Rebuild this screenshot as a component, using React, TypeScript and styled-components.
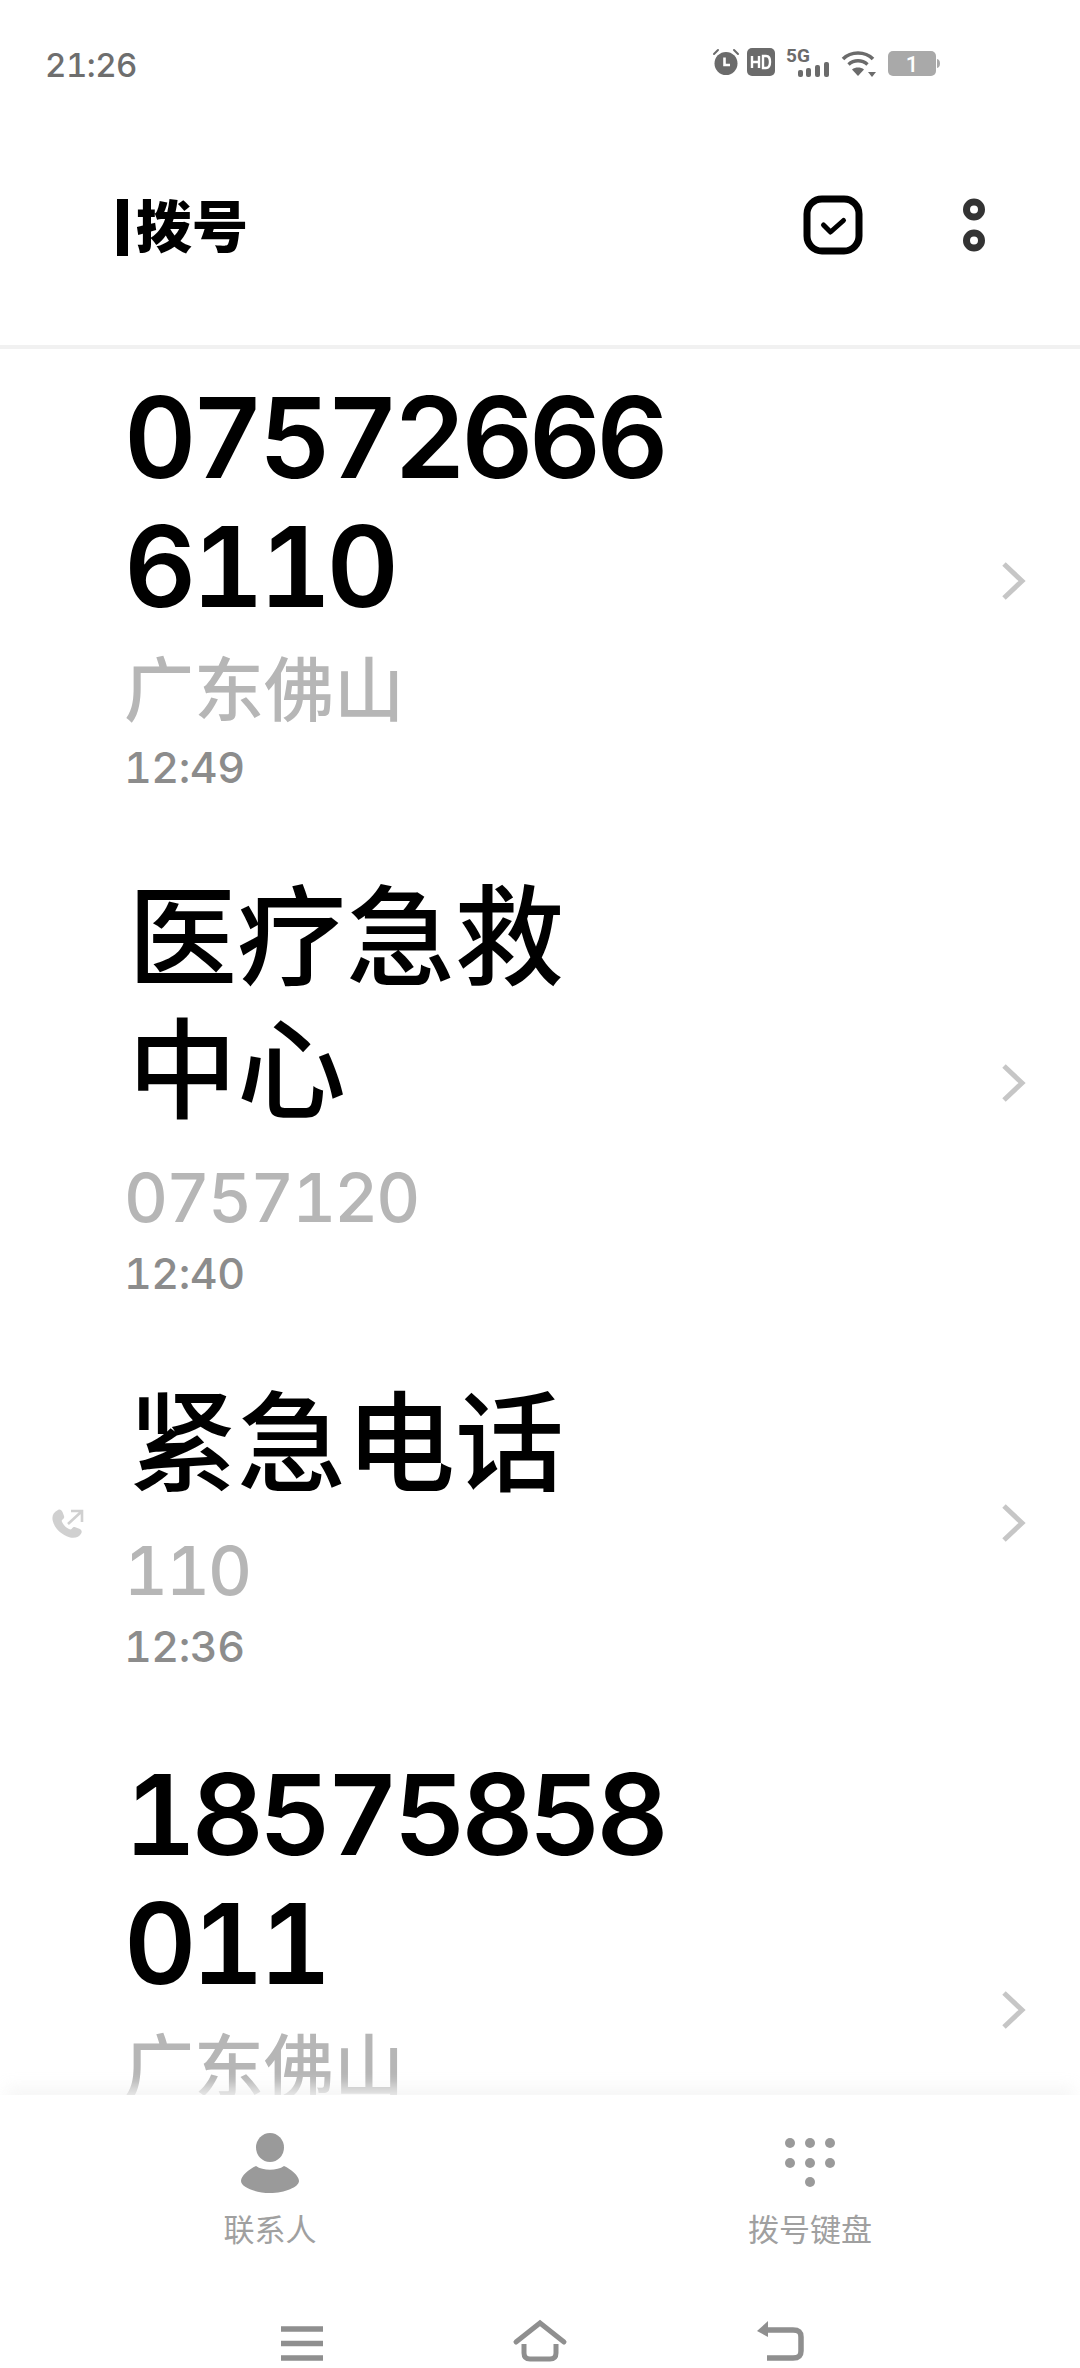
import React from "react";
import styled, { createGlobalStyle } from "styled-components";

const FONT = `Inter, "Noto Sans CJK SC", sans-serif`;

const GlobalStyle = createGlobalStyle`
  html, body {
    margin: 0;
    padding: 0;
    background: #fff;
  }
  * { box-sizing: border-box; }
  svg { overflow: visible; }
`;

const Screen = styled.div`
  width: 1080px;
  height: 2368px;
  display: flex;
  flex-direction: column;
  overflow: hidden;
  background: #fff;
  font-family: ${FONT};
  font-feature-settings: "tnum";
`;

const StatusBar = styled.div`
  height: 100px;
  flex: none;
  padding: 46px 140px 0 45px;
  display: flex;
  align-items: flex-start;
  justify-content: space-between;
`;

const Clock = styled.div`
  font-size: 33px;
  line-height: 38px;
  font-weight: 500;
  letter-spacing: -0.5px;
  color: #6e6e6e;
`;

const StatusIcons = styled.div`
  display: flex;
  align-items: flex-start;
  margin-top: 2px;
`;

const StatusSlot = styled.div<{ $gap: number }>`
  margin-right: ${(p) => p.$gap}px;
  display: flex;
`;

const Header = styled.header`
  height: 249px;
  flex: none;
  padding: 95px 95px 0 117px;
  display: flex;
  align-items: flex-start;
  justify-content: space-between;
  border-bottom: 4px solid #f1f1f1;
  position: relative;
  z-index: 1;
  background: #fff;
`;

const TitleGroup = styled.div`
  display: flex;
  align-items: center;
  gap: 8px;
  margin-top: 4px;
`;

const Cursor = styled.div`
  width: 11px;
  height: 57px;
  background: #000;
`;

const PageTitle = styled.h1`
  margin: 0;
  font-size: 56px;
  line-height: 57px;
  font-weight: 900;
  color: #000;
`;

const HeaderActions = styled.div`
  display: flex;
  align-items: flex-start;
  gap: 100px;
`;

const CallList = styled.div`
  flex: 1;
  min-height: 0;
  overflow: hidden;
`;

const CallRows = styled.div`
  margin-top: -14px;
`;

const CallRow = styled.div`
  display: grid;
  grid-template-columns: 124px 1fr auto;
  align-items: center;
  padding: 38px 54px 40px 0;
`;

const DirectionCell = styled.div`
  padding-left: 52px;
  display: flex;
`;

const CallText = styled.div<{ $extra?: number }>`
  min-width: 0;
  padding-bottom: ${(p) => p.$extra ?? 0}px;
`;

const CallName = styled.div<{ $cjk?: boolean }>`
  max-width: ${(p) => (p.$cjk ? 500 : 560)}px;
  font-size: ${(p) => (p.$cjk ? 109 : 112)}px;
  line-height: ${(p) => (p.$cjk ? 133 : 129)}px;
  font-weight: ${(p) => (p.$cjk ? 500 : 560)};
  letter-spacing: ${(p) => (p.$cjk ? 0 : -5)}px;
  color: #000;
  word-break: break-all;
  padding-left: ${(p) => (p.$cjk ? 4 : 0)}px;
`;

const CallInfo = styled.div<{ $cjk?: boolean }>`
  margin-top: 10px;
  font-size: ${(p) => (p.$cjk ? 70 : 68)}px;
  line-height: 100px;
  font-weight: 500;
  letter-spacing: ${(p) => (p.$cjk ? 0 : -2)}px;
  color: #b6b6b6;
`;

const CallTime = styled.div`
  font-size: 43px;
  line-height: 52px;
  font-weight: 500;
  letter-spacing: -0.5px;
  color: #8c8c8c;
`;

const RowChevron = styled.svg`
  margin-top: -4px;
`;

const TabBar = styled.nav`
  flex: none;
  height: 273px;
  background: #fff;
  box-shadow: 0 -14px 14px -6px rgba(245, 245, 245, 0.85);
  position: relative;
  display: flex;
  flex-direction: column;
`;

const Tabs = styled.div`
  display: grid;
  grid-template-columns: 1fr 1fr;
  padding-top: 38px;
`;

const Tab = styled.div`
  display: flex;
  flex-direction: column;
  align-items: center;
`;

const TabIconBox = styled.div`
  height: 60px;
  display: flex;
  align-items: center;
  justify-content: center;
`;

const TabLabel = styled.div`
  margin-top: 17px;
  font-size: 31px;
  line-height: 40px;
  color: #a0a0a0;
`;

const SystemNav = styled.div`
  margin-top: 70px;
  padding-left: 4px;
  display: flex;
  align-items: flex-end;
  justify-content: center;
  gap: 190px;
`;

const AlarmIcon = () => (
  <svg width="28" height="28" viewBox="0 0 28 28">
    <circle cx="14" cy="15.5" r="11.5" fill="#6b6b6b" />
    <path d="M2 6 6 2M26 6 22 2" stroke="#6b6b6b" strokeWidth="2" strokeLinecap="round" />
    <path d="M12.5 9.5v7.5h5.5" stroke="#fff" strokeWidth="2.6" fill="none" />
  </svg>
);

const HdIcon = () => (
  <svg width="28" height="28" viewBox="0 0 28 28">
    <rect width="28" height="28" rx="5" fill="#6b6b6b" />
    <path
      d="M5 8v12M12 8v12M5 14h7M16 8v12h3c3 0 4-2 4-6s-1-6-4-6z"
      stroke="#fff"
      strokeWidth="2.4"
      fill="none"
    />
  </svg>
);

const SignalIcon = () => (
  <svg width="44" height="29" viewBox="0 0 44 29">
    <text x="0" y="14" fontFamily="Roboto, sans-serif" fontSize="19" fontWeight="700" fill="#6b6b6b">
      5G
    </text>
    <rect x="12" y="22" width="5" height="7" rx="2" fill="#6b6b6b" />
    <rect x="20" y="20" width="5" height="9" rx="2" fill="#6b6b6b" />
    <rect x="29" y="17" width="5" height="12" rx="2" fill="#6b6b6b" />
    <rect x="38" y="14" width="5" height="15" rx="2" fill="#6b6b6b" />
  </svg>
);

const WifiIcon = () => (
  <svg width="36" height="27" viewBox="0 0 36 27" style={{ marginTop: 2 }}>
    <path d="M2 9C10 1 24 1 32 9" stroke="#6b6b6b" strokeWidth="3.6" fill="none" />
    <path d="M7.5 14.5C13 9.5 21 9.5 26.5 14.5" stroke="#6b6b6b" strokeWidth="3.4" fill="none" />
    <path d="M17 26l-6-6.5c3.5-2.6 8.5-2.6 12 0z" fill="#6b6b6b" />
    <path d="M27 22h8l-4 5z" fill="#6b6b6b" />
  </svg>
);

const BatteryIcon = () => (
  <svg width="52" height="26" viewBox="0 0 52 26" style={{ marginTop: 3 }}>
    <rect width="48" height="25" rx="5" fill="#a9a9a9" />
    <path d="M49 8c2 .4 3 2 3 4.500s-1 4-3 4.500z" fill="#a9a9a9" />
    <text x="24" y="21" textAnchor="middle" fontFamily="Roboto, sans-serif" fontSize="22" fontWeight="500" fill="#fff">
      1
    </text>
  </svg>
);

const CheckBoxIcon = () => (
  <svg width="60" height="60" viewBox="0 0 60 60">
    <rect x="4" y="4" width="52" height="52" rx="15" fill="none" stroke="#000" strokeWidth="7" />
    <path d="M20.500 30l7 7 13-11.500" fill="none" stroke="#000" strokeWidth="5" strokeLinecap="round" strokeLinejoin="round" />
  </svg>
);

const MoreIcon = () => (
  <svg width="22" height="57" viewBox="0 0 22 57" style={{ marginTop: 3 }}>
    <circle cx="11" cy="11.500" r="7.500" fill="none" stroke="#333" strokeWidth="7" />
    <circle cx="11" cy="42.500" r="7.500" fill="none" stroke="#333" strokeWidth="7" />
  </svg>
);

const OutgoingIcon = () => (
  <svg width="32" height="32" viewBox="0 0 32 32">
    <path
      d="M6 1c2-1 3.500 0 4.500 2l1.500 4c.5 1.500 0 2.500-1.500 3.500-1 .8-1 1.500-.3 2.800 1.500 3 3.800 5.300 6.800 6.800 1.300.7 2 .7 2.800-.3 1-1.500 2-2 3.500-1.500l4 1.500c2 1 3 2.500 2 4.500-2 4-7 5.500-12 4C9 25.500 2.500 19 .8 12 -.5 7 1.500 3 6 1z"
      fill="#d0d0d0"
    />
    <path d="M16 15 29 3M19 2h11v11" fill="none" stroke="#d0d0d0" strokeWidth="2.600" />
  </svg>
);

const Chevron = () => (
  <RowChevron width="25" height="38" viewBox="0 0 25 38">
    <path d="M3 2l18 17L3 36" fill="none" stroke="#c6c6c6" strokeWidth="5" />
  </RowChevron>
);

const PersonIcon = () => (
  <svg width="58" height="60" viewBox="0 0 58 60">
    <ellipse cx="29" cy="14.500" rx="14" ry="14.500" fill="#9a9a9a" />
    <path d="M15 33c7 5 21 5 28 0 7 3 15 10 15 15 0 6-14 12-29 12S0 54 0 48c0-5 8-12 15-15z" fill="#9a9a9a" />
  </svg>
);

const KeypadIcon = () => (
  <svg width="50" height="60" viewBox="0 0 50 60">
    {[5, 25, 45].map((x) =>
      [10, 30].map((y) => <circle key={`${x}-${y}`} cx={x} cy={y} r="5" fill="#9a9a9a" />)
    )}
    <circle cx="25" cy="49" r="5" fill="#9a9a9a" />
  </svg>
);

const MenuIcon = () => (
  <svg width="42" height="35" viewBox="0 0 42 35">
    <path d="M0 3h42M0 17.500h42M0 32h42" stroke="#8f8f8f" strokeWidth="5.500" />
  </svg>
);

const HomeIcon = () => (
  <svg width="54" height="41" viewBox="0 0 54 41">
    <path d="M3 22 27 3l24 19" fill="none" stroke="#8f8f8f" strokeWidth="5" strokeLinecap="round" />
    <path d="M11 24v9c0 4 2 6 6 6h20c4 0 6-2 6-6v-9" fill="none" stroke="#8f8f8f" strokeWidth="5" />
  </svg>
);

const BackIcon = () => (
  <svg width="47" height="40" viewBox="0 0 47 40">
    <path d="M10 9h26c6 0 8 2 8 7v14c0 5-2 7-8 7H10" fill="none" stroke="#8f8f8f" strokeWidth="5.500" />
    <path d="M0 10 11 0v16z" fill="#8f8f8f" />
  </svg>
);

type Call = {
  name: string;
  cjkName?: boolean;
  info: string;
  cjkInfo?: boolean;
  time?: string;
  outgoing?: boolean;
  extra?: number;
};

const calls: Call[] = [
  { name: "075726666110", info: "广东佛山", cjkInfo: true, time: "12:49" },
  { name: "医疗急救中心", cjkName: true, info: "0757120", time: "12:40" },
  { name: "紧急电话", cjkName: true, info: "110", time: "12:36", outgoing: true },
  { name: "18575858011", info: "广东佛山", cjkInfo: true, extra: 156 },
];

export default function App() {
  return (
    <Screen>
      <GlobalStyle />
      <StatusBar>
        <Clock>21:26</Clock>
        <StatusIcons>
          <StatusSlot $gap={7}><AlarmIcon /></StatusSlot>
          <StatusSlot $gap={11}><HdIcon /></StatusSlot>
          <StatusSlot $gap={11}><SignalIcon /></StatusSlot>
          <StatusSlot $gap={11}><WifiIcon /></StatusSlot>
          <StatusSlot $gap={0}><BatteryIcon /></StatusSlot>
        </StatusIcons>
      </StatusBar>
      <Header>
        <TitleGroup>
          <Cursor />
          <PageTitle>拨号</PageTitle>
        </TitleGroup>
        <HeaderActions>
          <CheckBoxIcon />
          <MoreIcon />
        </HeaderActions>
      </Header>
      <CallList>
        <CallRows>
          {calls.map((call) => (
            <CallRow key={call.name}>
              <DirectionCell>{call.outgoing && <OutgoingIcon />}</DirectionCell>
              <CallText $extra={call.extra}>
                <CallName $cjk={call.cjkName}>{call.name}</CallName>
                <CallInfo $cjk={call.cjkInfo}>{call.info}</CallInfo>
                {call.time && <CallTime>{call.time}</CallTime>}
              </CallText>
              <Chevron />
            </CallRow>
          ))}
        </CallRows>
      </CallList>
      <TabBar>
        <Tabs>
          <Tab>
            <TabIconBox><PersonIcon /></TabIconBox>
            <TabLabel>联系人</TabLabel>
          </Tab>
          <Tab>
            <TabIconBox><KeypadIcon /></TabIconBox>
            <TabLabel>拨号键盘</TabLabel>
          </Tab>
        </Tabs>
        <SystemNav>
          <MenuIcon />
          <HomeIcon />
          <BackIcon />
        </SystemNav>
      </TabBar>
    </Screen>
  );
}
